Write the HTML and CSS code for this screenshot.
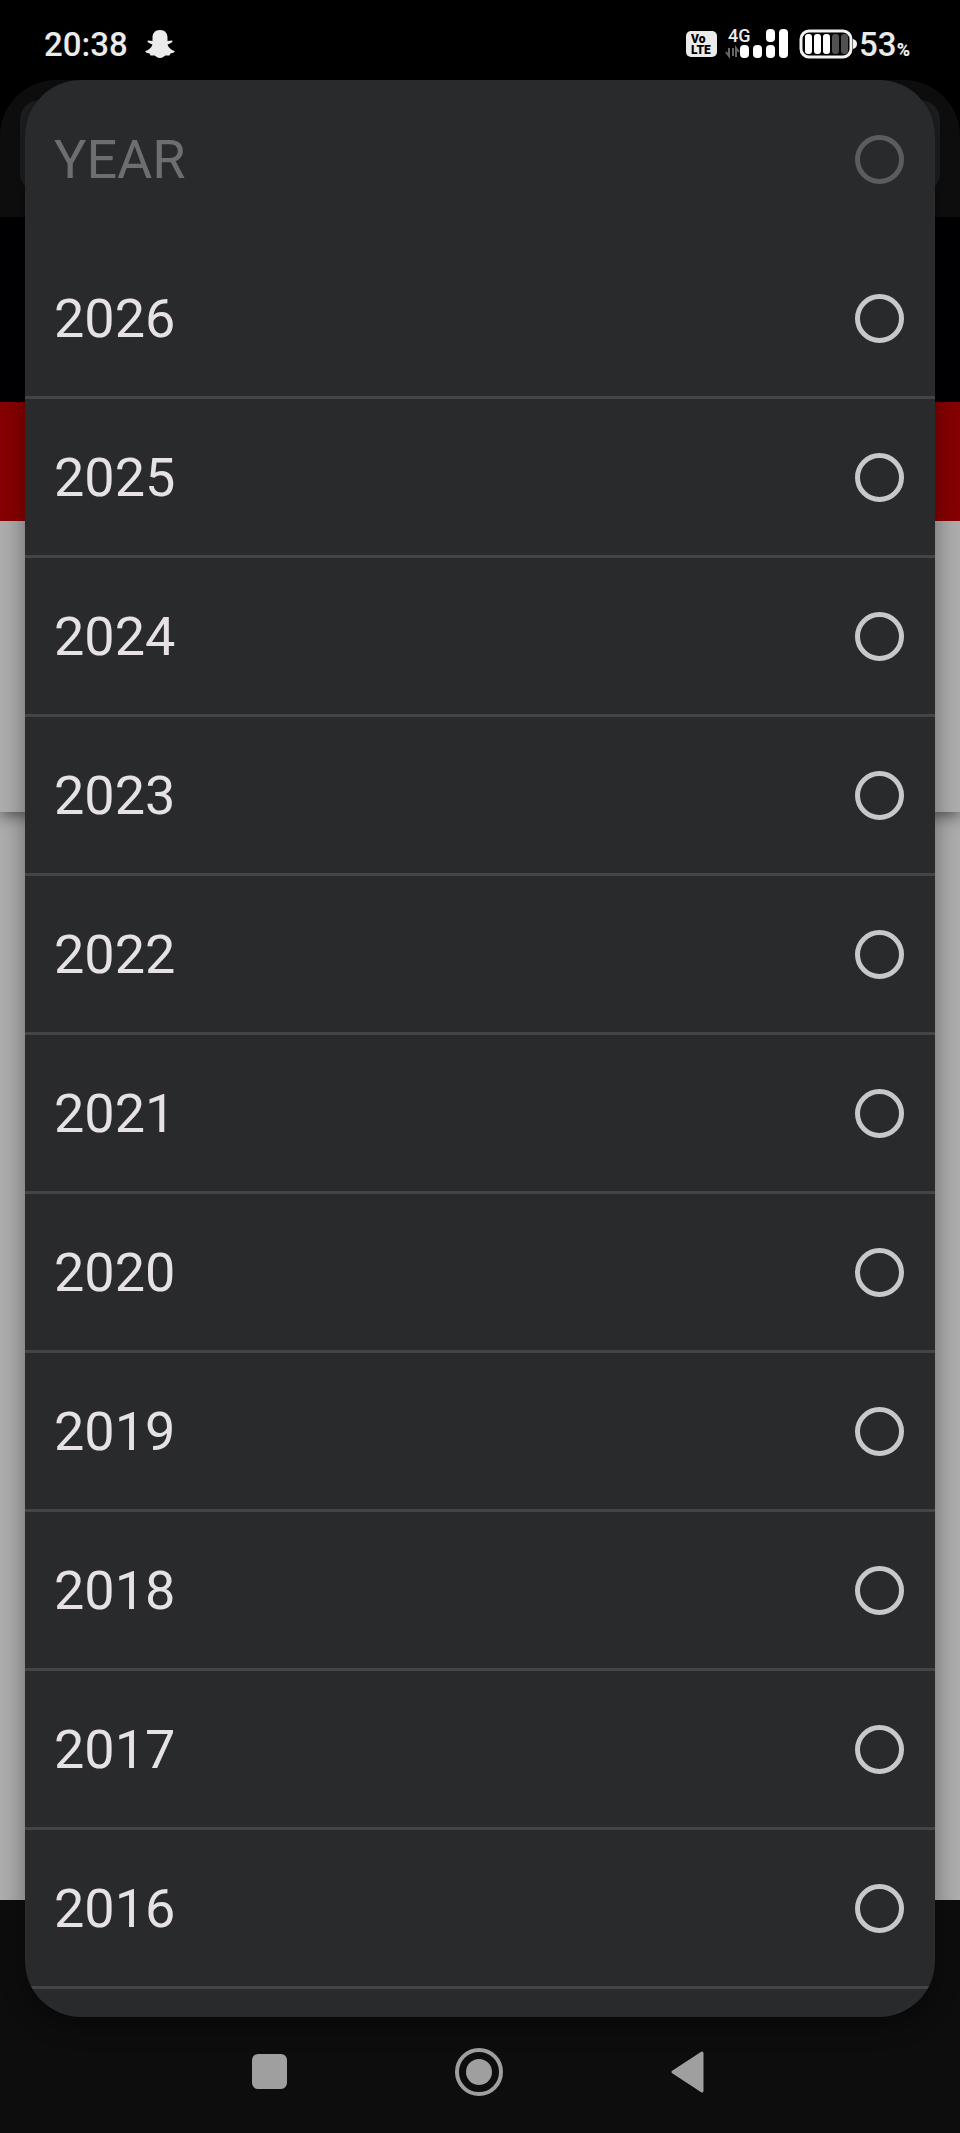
FILE: index.html
```html
<!DOCTYPE html>
<html lang="en">
<head>
<meta charset="utf-8">
<meta name="viewport" content="width=device-width, initial-scale=1">
<title>Year</title>
<link rel="stylesheet" href="styles.css">
</head>
<body>
<div class="screen">
  <header class="status">
    <time class="clock">20:38</time>
    <svg class="ghost" width="32" height="30" viewBox="0 0 32 30" aria-hidden="true"><path d="M16 1C11 1 8.500 4.500 8.500 8.500V12L4 11.500C3 12 3.500 13.200 5 14L8.500 15.500C7.500 18.500 5 21 1.500 22C.5 23 3 24 5.500 24.500L6.500 26.500L10.500 26.500C12.500 27.500 13.500 29 16 29S19.500 27.500 21.500 26.500L25.500 26.500L26.500 24.500C29 24 31.500 23 30.500 22C27 21 24.500 18.500 23.500 15.500L27 14C28.500 13.200 29 12 28 11.500L23.500 12V8.500C23.500 4.500 21 1 16 1Z" fill="#ebebeb"/></svg>
    <span class="volte"><span>Vo</span><span>LTE</span></span>
    <span class="signal">
      <svg width="64" height="30" viewBox="0 0 64 30" aria-hidden="true">
        <g fill="#fff"><rect x="15" y="16" width="9" height="13" rx="4"/><rect x="28" y="16" width="9" height="13" rx="4"/><rect x="41" y="16" width="9" height="13" rx="4"/><rect x="41" y="0" width="9" height="13" rx="4"/><rect x="54" y="0" width="9" height="29" rx="4"/></g>
        <path d="M1 23L4 27V19M8 19V27M11 28V19L14 23" fill="none" stroke="#666" stroke-width="2"/>
      </svg>
      <span class="network">4G</span>
    </span>
    <svg class="battery" width="58" height="30" viewBox="0 0 58 30" aria-hidden="true">
      <rect x="2" y="2" width="50" height="26" rx="8" fill="none" stroke="#f2f2f2" stroke-width="3"/>
      <path d="M54 10Q58 11 58 15T54 20Z" fill="#f2f2f2"/>
      <g fill="#fff"><rect x="6" y="5" width="7" height="20" rx="3"/><rect x="15" y="5" width="7" height="20" rx="3"/><rect x="24" y="5" width="7" height="20" rx="3"/></g>
      <g fill="#505050"><rect x="33" y="5" width="7" height="20" rx="3"/><rect x="42" y="5" width="7" height="20" rx="3"/></g>
    </svg>
    <span class="level">53<small>%</small></span>
  </header>

  <div class="page" aria-hidden="true">
    <div class="toolbar"><div class="address"></div></div>
    <div class="masthead"></div>
    <div class="banner"></div>
    <div class="panel"></div>
    <div class="content"></div>
  </div>

  <nav class="keys" aria-label="System">
    <button type="button" aria-label="Recent apps"><svg width="36" height="36" viewBox="0 0 36 36"><rect width="35" height="35" rx="6" fill="#9f9f9f"/></svg></button>
    <button type="button" aria-label="Home"><svg width="48" height="48" viewBox="0 0 48 48"><circle cx="24" cy="24" r="22" fill="none" stroke="#9f9f9f" stroke-width="4"/><circle cx="24" cy="24" r="13" fill="#9f9f9f"/></svg></button>
    <button type="button" aria-label="Back"><svg width="34" height="42" viewBox="0 0 34 42"><path d="M2 21L31 2V40Z" fill="#9f9f9f" stroke="#9f9f9f" stroke-width="3" stroke-linejoin="round"/></svg></button>
  </nav>

  <form class="dialog" role="dialog" aria-label="Year">
    <label class="option option-disabled">YEAR<input type="radio" name="year" disabled></label>
    <label class="option">2026<input type="radio" name="year"></label>
    <label class="option">2025<input type="radio" name="year"></label>
    <label class="option">2024<input type="radio" name="year"></label>
    <label class="option">2023<input type="radio" name="year"></label>
    <label class="option">2022<input type="radio" name="year"></label>
    <label class="option">2021<input type="radio" name="year"></label>
    <label class="option">2020<input type="radio" name="year"></label>
    <label class="option">2019<input type="radio" name="year"></label>
    <label class="option">2018<input type="radio" name="year"></label>
    <label class="option">2017<input type="radio" name="year"></label>
    <label class="option">2016<input type="radio" name="year"></label>
  </form>
</div>
</body>
</html>
```
FILE: styles.css
```css
* {
  box-sizing: border-box;
}

body {
  margin: 0;
  background: #000;
  font-family: Roboto, "Liberation Sans", sans-serif;
}

.screen {
  position: relative;
  display: flex;
  flex-direction: column;
  min-height: 100vh;
}

/* Status bar */
.status {
  display: flex;
  align-items: center;
  height: 80px;
  padding: 8px 50px 0 44px;
  color: #ebebeb;
}

.clock {
  font-size: 33px;
  font-weight: 500;
}

.ghost {
  margin-left: 16px;
}

.volte {
  display: flex;
  flex-direction: column;
  width: 31px;
  height: 26px;
  margin-left: auto;
  padding: 3px 0 0 5px;
  border-radius: 5px;
  background: #ebebeb;
  color: #000;
  font-size: 12px;
  font-weight: 900;
  line-height: 11px;
}

.signal {
  position: relative;
  display: flex;
  margin: 0 10px 0 8px;
}

.network {
  position: absolute;
  top: 0;
  left: 3px;
  font-size: 18px;
  font-weight: 500;
  line-height: 13px;
}

.level {
  display: flex;
  align-items: baseline;
  margin-left: 2px;
  font-size: 33px;
  font-weight: 500;
}

.level small {
  font-size: 18px;
  font-weight: 900;
}

/* Dimmed page behind the dialog */
.page {
  display: flex;
  flex: 1;
  flex-direction: column;
}

.toolbar {
  height: 137px;
  padding: 20px 20px 24px;
  border-radius: 56px 56px 0 0;
  background: #0e0e0e;
}

.address {
  height: 100%;
  border-radius: 20px;
  background: #1e1f20;
}

.masthead {
  height: 185px;
  background: #000003;
}

.banner {
  height: 119px;
  background: #870000;
}

.panel {
  z-index: 1;
  height: 291px;
  background: #adadad;
  box-shadow: 0 4px 14px rgba(0, 0, 0, 0.5);
  clip-path: inset(0 0 -24px);
}

.content {
  flex: 1;
  background: #adadad;
}

/* System navigation */
.keys {
  display: grid;
  grid-template-columns: repeat(3, 209px);
  justify-content: center;
  align-items: end;
  height: 233px;
  padding: 0 2px 37px 0;
  background: #0d0d0d;
}

.keys button {
  display: flex;
  align-items: center;
  justify-content: center;
  height: 48px;
  padding: 0;
  border: 0;
  background: none;
}

/* Option list */
.dialog {
  position: absolute;
  z-index: 2;
  top: 80px;
  right: 25px;
  left: 25px;
  padding: 1px 0 28px;
  overflow: hidden;
  border-radius: 56px;
  background: #292a2c;
  box-shadow: 0 8px 24px rgba(0, 0, 0, 0.4);
}

.option {
  display: flex;
  align-items: center;
  justify-content: space-between;
  height: 159px;
  padding: 0 31px 0 29px;
  border-bottom: 3px solid #434446;
  color: #e5e1e6;
  font-size: 54px;
}

.option input {
  width: 49px;
  height: 49px;
  margin: 0;
  border: 5px solid #c8c8c9;
  border-radius: 50%;
  appearance: none;
}

.option input:checked {
  background: radial-gradient(#c8c8c9 40%, transparent 45%);
}

.option-disabled {
  border-bottom-color: transparent;
  color: #6d6e71;
}

.option-disabled input {
  border-color: #5b5c5e;
}
```
